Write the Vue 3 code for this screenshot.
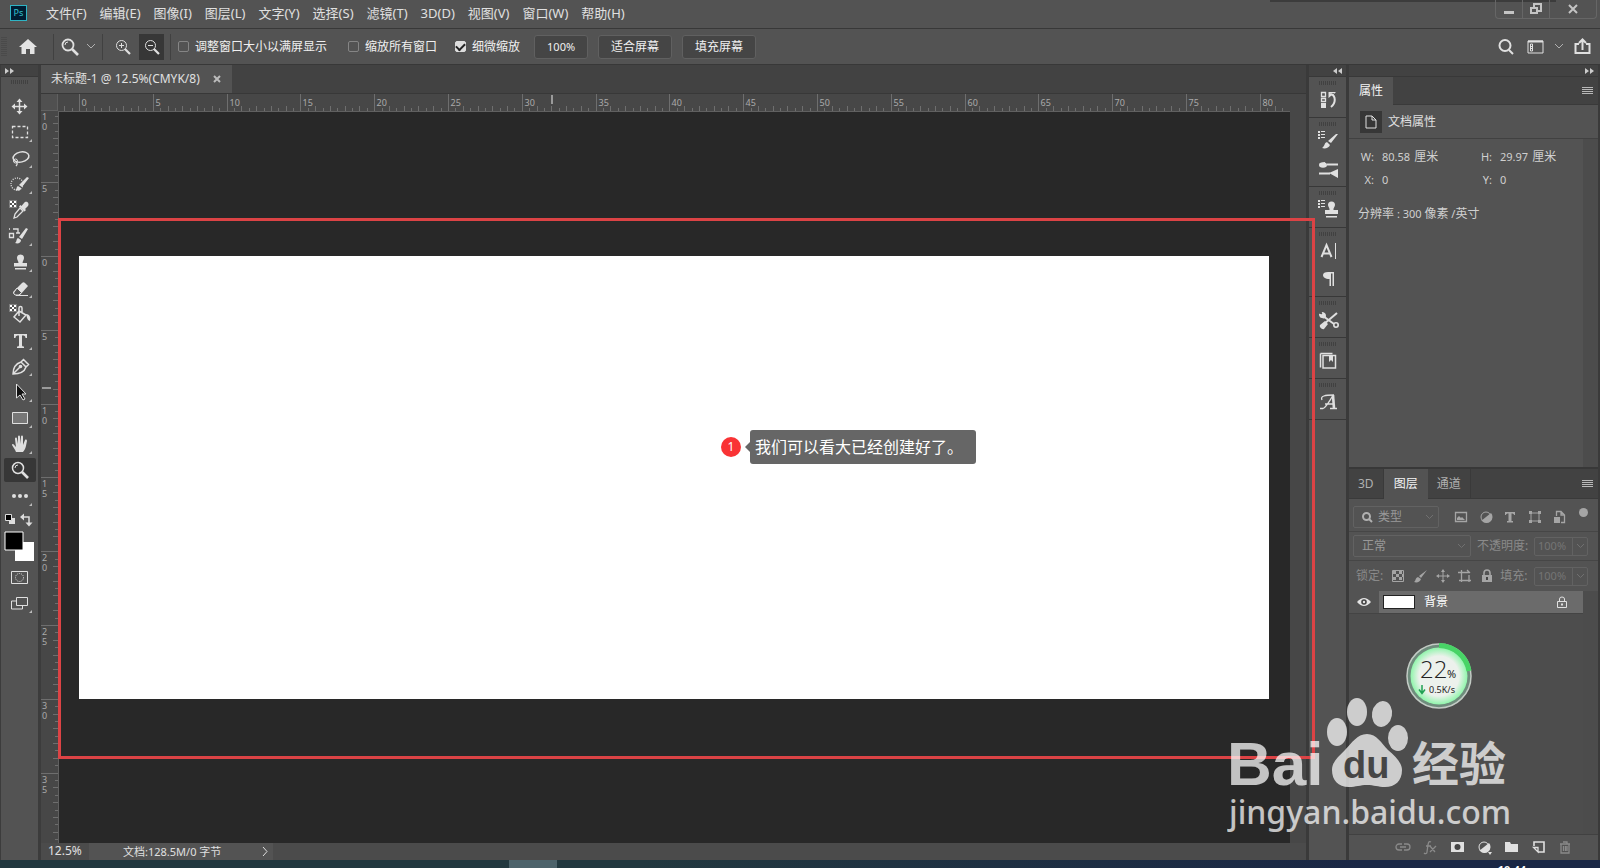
<template>
  <div class="app">
    <header class="menu-bar">
      <span class="logo">Ps</span>
      <nav class="menus">
        <button v-for="m in menus" :key="m" class="menu">{{ m }}</button>
      </nav>
      <div class="top-shade"></div>
      <div class="window-buttons">
        <button aria-label="最小化"><svg width="12" height="14"><path d="M1 9h10v3H1z" fill="#c4c4c4" /></svg></button>
        <button aria-label="还原"><svg width="14" height="14" fill="none" stroke="#c4c4c4" stroke-width="2"><path d="M5 5V2h7v7H9M2 6h6v5H2z" /></svg></button>
        <button class="close" aria-label="关闭"><svg width="12" height="14" stroke="#c4c4c4" stroke-width="2"><path d="M2 3l8 8M10 3l-8 8" /></svg></button>
      </div>
    </header>

    <div class="options-bar">
      <span class="grip-v"></span>
      <button class="home" aria-label="主页"><svg width="18" height="16"><path d="M9 0L18 8H15.500V15H11V10H7V15H2.500V8H0z" fill="#e4e4e4" /></svg></button>
      <span class="sep"></span>
      <button class="zoom-tool" aria-label="缩放工具">
        <svg width="18" height="18" v-html="icons.zoom"></svg>
        <svg width="8" height="5" class="line-icon"><path d="M0 0l4 4 4-4" /></svg>
      </button>
      <span class="sep"></span>
      <button class="square" aria-label="放大"><svg width="16" height="16" class="line-icon bright"><circle cx="6.500" cy="6.500" r="5" /><path d="M4 6.500h5M6.500 4v5" /><path d="M10 10l5 5" stroke-width="2.200" /></svg></button>
      <button class="square active" aria-label="缩小"><svg width="16" height="16" class="line-icon bright"><circle cx="6.500" cy="6.500" r="5" /><path d="M4 6.500h5" /><path d="M10 10l5 5" stroke-width="2.200" /></svg></button>
      <span class="sep"></span>
      <label class="check c1"><input type="checkbox" />调整窗口大小以满屏显示</label>
      <label class="check c2"><input type="checkbox" />缩放所有窗口</label>
      <label class="check c3"><input type="checkbox" checked />细微缩放</label>
      <button class="opt num">100%</button>
      <button class="opt">适合屏幕</button>
      <button class="opt">填充屏幕</button>
      <div class="options-right">
        <button aria-label="搜索"><svg width="16" height="16" class="line-icon bright thick"><circle cx="7" cy="6.500" r="5.500" /><path d="M11 11l4 4" /></svg></button>
        <button aria-label="工作区"><svg width="17" height="14" class="line-icon bright"><path d="M1 1h15v12H1z" /><path d="M1 1.500h15" stroke-width="2" /><path d="M3.500 4h2v7h-2zM3.500 6.500h2M3.500 8.500h2" /></svg></button>
        <button aria-label="工作区列表"><svg width="8" height="5" class="line-icon"><path d="M0 0l4 4 4-4" /></svg></button>
        <button aria-label="共享"><svg width="17" height="17" class="line-icon bright thick"><path d="M5 6H1.500v9h14V6H12" /><path d="M8.500 12V2M5 5l3.500-3.500L12 5" /></svg></button>
      </div>
    </div>

    <main class="main">
      <aside class="tools">
        <div class="strip"><svg width="9" height="6" v-html="icons.right"></svg></div>
        <span class="grip"></span>
        <div class="tool-list">
          <button v-for="t in tools" :key="t.name" class="tool" :class="{ active: t.active }" :aria-label="t.name">
            <svg width="32" height="24" v-html="t.svg"></svg>
          </button>
        </div>
        <div class="swatches">
          <svg width="36" height="54">
            <path d="M8 8h6v6H8z" fill="#ddd" />
            <path d="M4.500 4.500h6v6h-6z" fill="#000" stroke="#ddd" />
            <path d="M21 7h7v7" fill="none" stroke="#ddd" stroke-width="1.500" />
            <path d="M23 3.500v7L19 7zM24.500 12.500h7l-3.500 4z" fill="#ddd" />
            <path d="M14 32h19v19H14z" fill="#fff" />
            <path d="M4 22h18v18H4z" fill="#000" stroke="#fff" stroke-width="1" />
          </svg>
        </div>
        <button class="tool" aria-label="快速蒙版"><svg width="32" height="24" class="line-icon bright"><path d="M7.500 6.500h16v12h-16z" /><circle cx="15.500" cy="12.500" r="4" stroke-dasharray="1 1" /></svg></button>
        <button class="tool" aria-label="屏幕模式"><svg width="32" height="24" class="line-icon bright"><path d="M12 10H7.500v8h11v-3" /><path d="M12.500 6.500h11v8h-11z" /><path d="M28 19v3h-3z" fill="#bbb" stroke="none" /></svg></button>
      </aside>

      <section class="document">
        <div class="tab-row">
          <div class="doc-tab">未标题-1 @ 12.5%(CMYK/8)<button aria-label="关闭文档"><svg width="8" height="8" stroke="#bbb" stroke-width="2"><path d="M1 1l6 6M7 1L1 7" /></svg></button></div>
        </div>
        <div class="view">
          <div class="corner"></div>
          <svg class="ruler-h">
            <line v-for="t in hTicks" :key="t.i" :x1="t.pos" :x2="t.pos" :y1="t.start" y2="17" />
            <text v-for="t in hLabels" :key="t.i" :x="t.pos + 2" y="12">{{ t.label }}</text>
            <line class="cursor" x1="494" x2="494" y1="1" y2="10" />
          </svg>
          <svg class="ruler-v">
            <line v-for="t in vTicks" :key="t.i" :y1="t.pos" :y2="t.pos" :x1="t.start" x2="17" />
            <template v-for="t in vLabels" :key="t.i">
              <text v-for="(c, n) in t.label" :key="n" x="1" :y="t.pos + 9 + n * 10">{{ c }}</text>
            </template>
            <line class="cursor" y1="277" y2="277" x1="1" x2="10" />
          </svg>
          <div class="workspace">
            <div class="canvas">
              <div class="note">
                <span class="badge">1</span>
                <span class="bubble">我们可以看大已经创建好了。</span>
              </div>
            </div>
          </div>
        </div>
        <footer class="status">
          <span class="zoom-value">12.5%</span>
          <button class="doc-info"><span>文档:128.5M/0 字节</span><svg width="6" height="11" class="line-icon bright"><path d="M1 1l4 4.500-4 4.500" /></svg></button>
        </footer>
      </section>

      <aside class="dock">
        <div class="strip"><svg width="9" height="6" v-html="icons.left"></svg></div>
        <div v-for="(g, n) in dock" :key="n" class="dock-group">
          <span class="grip"></span>
          <button v-for="d in g" :key="d.name" :aria-label="d.name"><svg width="24" height="24" v-html="d.svg"></svg></button>
        </div>
      </aside>

      <aside class="panels">
        <div class="strip"><svg width="9" height="6" v-html="icons.right"></svg></div>
        <section class="props">
          <div class="panel-tabs">
            <button class="panel-tab on">属性</button>
            <button class="burger" aria-label="面板菜单"><i></i></button>
          </div>
          <h2><span class="doc-icon"><svg width="12" height="14" class="line-icon bright"><path d="M1 1h6l4 4v8H1zM7 1v4h4" /></svg></span>文档属性</h2>
          <div class="scroll-body">
            <div class="prop-body">
              <dl class="prop-grid">
                <dt>W:</dt><dd>80.58<b>厘米</b></dd>
                <dt>H:</dt><dd>29.97<b>厘米</b></dd>
                <dt>X:</dt><dd>0</dd>
                <dt>Y:</dt><dd>0</dd>
              </dl>
              <p><b>分辨率</b> : 300 <b>像素</b> /<b>英寸</b></p>
            </div>
            <div class="scroll-track"></div>
          </div>
        </section>

        <section class="layers">
          <div class="panel-tabs">
            <button class="panel-tab off">3D</button>
            <button class="panel-tab on">图层</button>
            <button class="panel-tab off">通道</button>
            <button class="burger" aria-label="面板菜单"><i></i></button>
          </div>
          <div class="row filter">
            <div class="field kind">
              <svg width="11" height="11" class="line-icon thick"><circle cx="4.500" cy="4.500" r="3.500" /><path d="M7 7l3 3" /></svg>
              <select aria-label="类型"><option>类型</option></select>
              <svg width="7" height="4" class="line-icon faint"><path d="M0 0l3.500 3.500L7 0" /></svg>
            </div>
            <div class="icons filters">
              <button v-for="f in filters" :key="f.name" :aria-label="f.name"><svg width="14" height="14" v-html="f.svg"></svg></button>
            </div>
            <span class="dot"></span>
          </div>
          <div class="row blend">
            <div class="field mode">
              <select aria-label="混合模式"><option>正常</option></select>
              <svg width="7" height="4" class="line-icon faint"><path d="M0 0l3.500 3.500L7 0" /></svg>
            </div>
            <label for="opacity">不透明度:</label>
            <div class="pct"><input id="opacity" value="100%" /><button aria-label="不透明度滑块"><svg width="7" height="4" class="line-icon faint"><path d="M0 0l3.500 3.500L7 0" /></svg></button></div>
          </div>
          <div class="row lock">
            <span>锁定:</span>
            <div class="icons locks">
              <button v-for="l in locks" :key="l.name" :aria-label="l.name"><svg width="14" height="14" v-html="l.svg"></svg></button>
            </div>
            <label for="fill">填充:</label>
            <div class="pct"><input id="fill" value="100%" /><button aria-label="填充滑块"><svg width="7" height="4" class="line-icon faint"><path d="M0 0l3.500 3.500L7 0" /></svg></button></div>
          </div>
          <div class="scroll-body list">
            <ul>
              <li>
                <button class="eye" aria-label="可见性"><svg width="14" height="10"><path d="M0 5Q7-3 14 5Q7 13 0 5z" fill="#e4e4e4" /><circle cx="7" cy="5" r="2.800" fill="#444" /><circle cx="7" cy="5" r="1.200" fill="#e4e4e4" /></svg></button>
                <div class="layer">
                  <span class="thumb"></span><span class="layer-name">背景</span>
                  <svg width="12" height="13" class="line-icon bright"><path d="M1.500 5.500h9v6h-9zM3.500 5.500V3a2.500 2 0 015 0v2.500" /><path d="M6 7.500v2" stroke-width="2" /></svg>
                </div>
              </li>
            </ul>
            <div class="scroll-track"></div>
          </div>
          <div class="layer-actions">
            <button v-for="a in actions" :key="a.name" :aria-label="a.name"><svg width="16" height="16" v-html="a.svg"></svg></button>
          </div>
        </section>
      </aside>
    </main>

    <footer class="taskbar"><span class="task"></span><time>10:44</time></footer>

    <div class="frame"></div>

    <div class="meter">
      <svg width="68" height="68" viewBox="-34 -34 68 68">
        <defs>
          <radialGradient id="meterFill">
            <stop offset="0.700" stop-color="#ecf1ec" />
            <stop offset="1" stop-color="#90f5ab" />
          </radialGradient>
        </defs>
        <circle r="32" fill="#6e8c7c" stroke="#c3cbc5" stroke-width="1.500" />
        <circle r="28.500" fill="url(#meterFill)" />
        <path d="M0-30.500A30.500 30.500 0 0 1 30-5" fill="none" stroke="#48d466" stroke-width="5" />
        <text x="-19" y="2" font-size="24" class="thin">22</text>
        <text x="8" y="2" font-size="11">%</text>
        <path d="M-17 9v8M-20 13.500l3 4 3-4" fill="none" stroke="#21a053" stroke-width="1.500" />
        <text x="-10" y="17" font-size="9">0.5K/s</text>
      </svg>
    </div>

    <svg class="watermark" width="300" height="146" viewBox="0 -6 300 146">
      <text x="0" y="84" class="latin">Bai</text>
      <ellipse cx="110" cy="31" rx="10" ry="14" />
      <ellipse cx="130" cy="11" rx="10" ry="14" />
      <ellipse cx="155" cy="13" rx="10" ry="13" transform="rotate(10 155 13)" />
      <ellipse cx="171" cy="37" rx="10" ry="13" />
      <path d="M140 33C150 33 154 42 161 49C169 56 175 62 175 69C175 80 168 86 158 86C151 86 147 84 140 84C133 84 129 86 122 86C111 86 105 79 105 69C105 61 111 56 118 49C125 42 130 33 140 33z" />
      <text x="116" y="77" class="du">du</text>
      <text x="185" y="80" class="cjk">经验</text>
      <text x="2" y="123" class="url">jingyan.baidu.com</text>
    </svg>
  </div>
</template>

<script setup>
const menus = ['文件(F)', '编辑(E)', '图像(I)', '图层(L)', '文字(Y)', '选择(S)', '滤镜(T)', '3D(D)', '视图(V)', '窗口(W)', '帮助(H)'];

///////////////////////////////////////////////////////////////////////////////
// rulers

const CM = 14.76;

// two ticks per centimetre, a long one every five
function makeTicks(from, to, origin) {
    const list = [];
    for (let i = from; i <= to; i++) {
        const major = i % 10 === 0;
        list.push({
            i,
            pos: Math.round(origin + i * CM / 2) + 0.5,
            start: major ? 0 : (i % 2 === 0 ? 12 : 14),
            label: major ? String(Math.abs(i / 2)) : '',
        });
    }
    return list;
}

const hTicks = makeTicks(-2, 163, 21);
const vTicks = makeTicks(-19, 79, 145);
const hLabels = hTicks.filter((t) => t.label);
const vLabels = vTicks.filter((t) => t.label).concat({ i: 'top', pos: 0, label: '10' });

///////////////////////////////////////////////////////////////////////////////
// icons

const W = 'fill="#e0e0e0"';
const S = 'fill="none" stroke="#e0e0e0"';
const G = 'fill="#a5a5a5"';
const GS = 'fill="none" stroke="#a5a5a5"';
const corner = '<path d="M28 19v3h-3z" fill="#bbb"/>';
const dots = '<path d="M2 2h2v2H2zM2 5h2v2H2zM2 8h2v2H2zM5 2h4v1H5zM5 5h4v1H5zM5 8h4v1H5z" fill="#e0e0e0"/>';
const checker = '<path d="M6 3h2v2H6zM10 3h2v2h-2zM8 5h2v2H8zM6 7h2v2H6zM10 7h2v2h-2z" fill="#fff"/><path d="M5.500 2.500h7v7h-7z" fill="none" stroke="#aaa" stroke-dasharray="1 1"/>';
const stamp = `<path d="M13 8a3.500 3.500 0 117 0c0 2-1.500 3-1.500 5H23v3.500H10V13h4.500c0-2-1.500-3-1.500-5zM11 18h11v1.500H11z" ${W}/>`;

const icons = {
    zoom: `<circle cx="7" cy="7" r="5.500" ${S} stroke-width="1.800"/><path d="M4 7a3 3 0 013-3" ${S}/><path d="M11 11l6 6" ${S} stroke-width="2.600"/>`,
    right: '<path d="M0 0l4 3-4 3zM5 0l4 3-4 3z" fill="#ccc"/>',
    left: '<path d="M4 0L0 3l4 3zM9 0L5 3l4 3z" fill="#ccc"/>',
};

const tools = [
    { name: '移动', svg: `<path d="M15.500 7v11M10 12.500h11" ${S} stroke-width="1.500"/><path d="M15.500 4.500l3 3.500h-6zM15.500 20.500l3-3.500h-6zM7.500 12.500l3.500-3v6zM23.500 12.500l-3.500-3v6z" ${W}/>` },
    { name: '矩形选框', svg: `<path d="M8.500 6.500h15v11h-15z" ${S} stroke-width="1.300" stroke-dasharray="3 2"/>${corner}` },
    { name: '套索', svg: `<ellipse cx="17" cy="11" rx="8" ry="5" transform="rotate(-12 17 11)" ${S} stroke-width="1.500"/><circle cx="11.500" cy="15" r="2" ${S}/><path d="M12 16c2 1 1 3 0 4" ${S} stroke-width="1.300"/>${corner}` },
    { name: '快速选择', svg: `<circle cx="13" cy="12" r="6" ${S} stroke-width="1.300" stroke-dasharray="1 1.300"/><path d="M25 6l-7 9-3-2 8-8zM14 14l3 2c0 3-3 3-6 2 2 0 1-3 3-4z" ${W}/>${corner}` },
    { name: '吸管', svg: `${checker}<path d="M20 5c2-3 6 0 4 3l-3 3 1 1-1.500 1.500-5.500-5L16.500 7l1 1z" ${W}/><path d="M16 10l3 3-6 6-3 1 1-4z" ${S} stroke-width="1.300"/>` },
    { name: '混合画笔', svg: `<path d="M5.500 9.500h4v4h-4zM9 5h5v4M5 5h1M12 9h4" ${S} stroke-width="1.300"/><path d="M24 5l-6 10-3-2 7-9zM14 14l3 2c0 3-3 4-6 3 2-1 1-4 3-5z" ${W}/>${corner}` },
    { name: '仿制图章', svg: `${stamp}${corner}` },
    { name: '橡皮擦', svg: `<path d="M9 16l9-9c1-1 2-1 3 0l3 3-8 9h-5l-2-2z" ${W}/><path d="M13 12l4.500 4.500L15 19h-4l-1.500-2z" fill="#555" stroke="#e0e0e0"/><path d="M12 19.500h12" ${S}/>${corner}` },
    { name: '油漆桶', svg: `${checker}<path d="M15 9l7 4-6 7-6-5zM15 14V6c0-2 3-2 3 0v4" ${S} stroke-width="1.500"/><path d="M22 12c4 0 5 4 4 7-3-1-3-4-4-7z" ${W}/>` },
    { name: '文字', svg: `<path d="M10 6h13v4h-1.500c0-2-1-2.500-3.500-2.500V17c0 1 .5 1.500 2 1.500V20h-7v-1.500c1.500 0 2-.5 2-1.500V7.500c-2.500 0-3.500.5-3.500 2.500H10z" ${W}/>${corner}` },
    { name: '钢笔', svg: `<path d="M9 20c0-6 2-10 8-12l5 5c-2 6-7 7-13 7zM9 20l7-7M17 8l2.500-2.500 5 5L22 13" ${S} stroke-width="1.500"/><circle cx="16.500" cy="12.500" r="1.800" ${W}/>${corner}` },
    { name: '路径选择', svg: `<path d="M12.500 4v14l3.500-3 3 5 2-1-3-5h4z" fill="#111" stroke="#e0e0e0"/>${corner}` },
    { name: '矩形', svg: `<path d="M8.500 6.500h15v11h-15z" fill="#777" stroke="#e0e0e0"/>${corner}` },
    { name: '抓手', svg: `<path d="M12 20c-1-3-3-5-4-7 0-2 2-1 3 1l1 1-1-8c0-2 2-2 2 0l1 5V5c0-2 2-2 2 0v7l1-7c0-2 2-2 2 0v8l2-5c1-1 2 0 2 1-1 4-1 8-4 11z" ${W}/>${corner}` },
    { name: '缩放', active: true, svg: `<circle cx="14" cy="10" r="5.500" ${S} stroke-width="1.500"/><path d="M11 10a3 3 0 013-3" ${S}/><path d="M18 14l6 6" ${S} stroke-width="2.600"/>` },
    { name: '更多', svg: `<circle cx="10" cy="12" r="2" ${W}/><circle cx="16" cy="12" r="2" ${W}/><circle cx="22" cy="12" r="2" ${W}/>${corner}` },
];

const dock = [
    [
        { name: '历史记录', svg: `<path d="M5.500 4.500h4v4h-4zM5.500 10.500h4v3h-4z" ${S} stroke-width="1.300"/><path d="M5 15h5v5H5z" ${W}/><path d="M13 4h7l-3 3z M12.500 4v6l6-5z" ${W}/><path d="M15 6c5 2 5 9 0 13" ${S} stroke-width="2"/>` },
    ],
    [
        { name: '画笔设置', svg: `${dots}<path d="M22 5l-7 9-3-2 8-7zM11 13l3 3c-1 3-5 4-8 3 3-2 2-5 5-6z" ${W}/>` },
        { name: '画笔', svg: `<path d="M11 7.500h11M3 16.500h11" ${S} stroke-width="2"/><ellipse cx="7" cy="8" rx="4" ry="2.800" ${W}/><path d="M3 7l6-2v3zM13 16l9-4v9z" ${W}/>` },
    ],
    [
        { name: '仿制源', svg: `${dots}<path d="M12 7a3.500 3.500 0 117 0c0 2-2 3-1.500 5H22v4H9v-4h4.500C14 10 12 9 12 7zM10 18h11v1.500H10z" ${W}/>` },
    ],
    [
        { name: '字符', svg: `<path d="M5.500 18L10.500 6l5 12M7.500 14.500h6" ${S} stroke-width="2"/><path d="M19.500 4v16" ${S}/>` },
        { name: '段落', svg: `<path d="M18 5v14h-1.500V6.500H15V19h-1.500v-7C9 12 7 10 7 8s2-3 5-3z" ${W}/>` },
    ],
    [
        { name: '工具预设', svg: `<path d="M8 16L21 5" ${S} stroke-width="2"/><path d="M7 8l11 8" ${S} stroke-width="2"/><path d="M4 17l5-4 3 3-4 5c-2 1-5-2-4-4zM3 6c1-1 2 1 3 0s-1-2 0-2c2 0 4 1 4 4 0 2-2 3-4 2C4 10 3 8 3 6z" ${W}/><circle cx="20" cy="17" r="2.200" ${S} stroke-width="1.600"/>` },
    ],
    [
        { name: '库', svg: `<path d="M4.500 4.500h12M4.500 4.500v14M7 6.500h12.500v12.500H7z" ${S} stroke-width="1.500"/><path d="M4 18h3M13 7h4v6l-2-2-2 2z" ${W}/>` },
    ],
    [
        { name: '字形', svg: `<path d="M4 18.500h3c3-1 6-7 10-13M9 14h8M6 10c-2-4 3-5 12-5M14 18.500h7" ${S} stroke-width="1.300"/><path d="M17 5l1 13.500" ${S} stroke-width="2.600"/>` },
    ],
];

const filters = [
    { name: '像素', svg: `<path d="M1.500 2.500h11v9h-11z" ${GS} stroke-width="1.300"/><path d="M3 10V8l2-2 2 2 1-1 3 3z" ${G}/>` },
    { name: '调整', svg: `<circle cx="7" cy="7" r="5" ${GS}/><path d="M2 11L12 3a6 6 0 01-9 8z" ${G}/>` },
    { name: '文字', svg: `<path d="M2 2h10v3h-1c0-1-1-1.500-2.500-1.500V11h1.500v1.500H4V11h1.500V3.500C4 3.500 3 4 3 5H2z" ${G}/>` },
    { name: '形状', svg: `<path d="M3 3h8v8H3z" ${GS}/><path d="M1 1h3v3H1zM10 1h3v3h-3zM1 10h3v3H1zM10 10h3v3h-3z" ${G}/>` },
    { name: '智能对象', svg: `<path d="M4.500 6V1.500H9L12.500 5v7.500H9M9 1.500V5h3" ${GS} stroke-width="1.300"/><path d="M2 7h6v6H2z" ${G}/>` },
];

const locks = [
    { name: '透明像素', svg: `<path d="M1.500 1.500h11v11h-11z" ${GS}/><path d="M2 2h3v3H2zM8 2h3v3H8zM5 5h3v3H5zM11 5h2v3h-2zM2 8h3v3H2zM8 8h3v3H8z" ${G}/>` },
    { name: '图像像素', svg: `<path d="M14 1L8 9 6 7zM5 8l3 2c-1 3-4 4-7 3 2-1 1-4 4-5z" ${G}/>` },
    { name: '位置', svg: `<path d="M7 2v10M2 7h10" ${GS}/><path d="M7 0l2 3H5zM7 14l2-3H5zM0 7l3-2v4zM14 7l-3-2v4z" ${G}/>` },
    { name: '画板', svg: `<path d="M3.500 1v12M0 3.500h11M11 6v7M1 11.500h12M9 1l3 3" ${GS} stroke-width="1.300"/>` },
    { name: '全部', svg: `<path d="M2 6h10v7H2z" ${G}/><path d="M4 6V4a3 3 0 016 0v2" ${GS} stroke-width="1.600"/><path d="M6 8h2v3H6z" fill="#444"/>` },
];

const actions = [
    { name: '链接', svg: '<path d="M7 5H4a3 3 0 000 6h3M9 5h3a3 3 0 010 6H9M5 8h6" fill="none" stroke="#8a8a8a" stroke-width="1.300"/>' },
    { name: '样式', svg: '<path d="M9 3C6 1 6 6 5 13c0 2-2 2-3 1M4 7h5M8 7l5 6M14 7l-6 6" fill="none" stroke="#8a8a8a" stroke-width="1.300"/>' },
    { name: '蒙版', svg: `<path d="M2 3h13v10H2z" ${W}/><circle cx="8.500" cy="8" r="3" fill="#444"/>` },
    { name: '调整图层', svg: `<circle cx="8" cy="8" r="5" ${S}/><path d="M3 12L13 4a6 6 0 01-9 8zM12 13h4l-2 3z" ${W}/>` },
    { name: '新建组', svg: `<path d="M2 3h5l1 2h7v8H2z" ${W}/>` },
    { name: '新建图层', svg: `<path d="M4 7V3h10v10H8" ${S} stroke-width="1.600"/><path d="M3.500 8.500H8V13z" ${S} stroke-width="1.300"/>` },
    { name: '删除', svg: '<path d="M3 5h10M4 5v9h8V5M6 3h4v2M6.500 7v5M8.500 7v5M10 7v5" fill="none" stroke="#8a8a8a" stroke-width="1.300"/>' },
];
</script>

<style>
body {
    margin: 0;
    background: #282828;
}
</style>

<style scoped>
* {
    box-sizing: border-box;
}

.app {
    position: relative;
    display: flex;
    flex-direction: column;
    height: 100vh;
    overflow: hidden;
    background: #535353;
    color: #e0e0e0;
    font: 12px/16px "Noto Sans", "Noto Sans CJK SC", sans-serif;
}

button, input, select {
    margin: 0;
    padding: 0;
    border: 0;
    background: none;
    color: inherit;
    font: inherit;
    appearance: none;
}

button {
    display: flex;
    align-items: center;
    justify-content: center;
}

svg {
    display: block;
    flex: none;
}

.line-icon {
    fill: none;
    stroke: #b0b0b0;
}

.bright {
    stroke: #e0e0e0;
}

.thick {
    stroke-width: 2;
}

.faint {
    stroke: #707070;
}

/* menu */

.menu-bar {
    display: flex;
    height: 29px;
    flex: none;
    border-bottom: 1px solid #383838;
}

.logo {
    width: 17px;
    height: 16px;
    margin: 5px 19px 0 10px;
    border: 1px solid #2fb4c4;
    background: #001d33;
    color: #35c0d0;
    font-size: 9px;
    line-height: 13px;
    text-align: center;
}

.menus {
    display: flex;
    gap: 13px;
    height: 25px;
    font-size: 13px;
}

.top-shade {
    width: 286px;
    height: 2px;
    margin: 0 -61px 0 auto;
    background: #3c3c3c;
}

.window-buttons {
    display: flex;
    height: 19px;
    margin-right: 3px;
    border: 1px solid #666;
    border-top: 0;
    border-radius: 0 0 4px 4px;
}

.window-buttons button {
    width: 27px;
    border-right: 1px solid #666;
}

.window-buttons .close {
    width: 46px;
    border: 0;
}

/* options */

.options-bar {
    display: flex;
    align-items: center;
    height: 36px;
    flex: none;
    border-bottom: 1px solid #383838;
}

.grip-v {
    width: 6px;
    height: 20px;
    margin-left: 1px;
    background: repeating-linear-gradient(#4a4a4a 0 1px, transparent 1px 2px);
}

.home {
    width: 46px;
    padding-right: 4px;
}

.sep {
    width: 1px;
    height: 26px;
    background: #414141;
}

.zoom-tool {
    gap: 8px;
    width: 48px;
}

.square {
    width: 25px;
    height: 26px;
    margin-left: 7px;
}

.square.active {
    margin: 0 6px 0 4px;
    background: #373737;
}

.check {
    display: flex;
    align-items: center;
    gap: 6px;
    margin-left: 21px;
    color: #f0f0f0;
    white-space: nowrap;
}

.check.c1 {
    margin-left: 7px;
}

.check.c3 {
    margin-left: 18px;
}

.check input {
    width: 11px;
    height: 11px;
    border: 1px solid #858585;
    border-radius: 2px;
}

.check input:checked {
    border-color: #ddd;
    background: #ddd;
    display: grid;
    place-items: center;
}

.check input:checked::after {
    content: '';
    width: 7px;
    height: 4px;
    margin-top: -2px;
    border: solid #222;
    border-width: 0 0 2px 2px;
    transform: rotate(-45deg);
}

.opt {
    height: 24px;
    margin-left: 10px;
    padding: 0 12px;
    border: 1px solid #606060;
    border-radius: 3px;
    background: #454545;
    color: #f0f0f0;
}

.opt.num {
    margin-left: 14px;
    font-size: 11px;
}

.options-right {
    display: flex;
    gap: 13px;
    margin-left: auto;
    padding-right: 9px;
}

.options-right button:nth-child(3) {
    margin: 0 -2px;
}

/* main columns */

.main {
    display: flex;
    flex: 1;
    min-height: 0;
}

.strip {
    display: flex;
    align-items: center;
    height: 12px;
    flex: none;
    padding: 0 4px;
    border-bottom: 1px solid #383838;
    background: #424242;
}

.tools {
    width: 41px;
    flex: none;
    border: solid #3c3c3c;
    border-width: 0 3px 0 1px;
}

.grip {
    display: block;
    width: 18px;
    height: 4px;
    background: repeating-linear-gradient(90deg, #414141 0 1px, transparent 1px 2px);
}

.tools .grip {
    margin: 3px auto 10px;
}

.tool {
    width: 32px;
    height: 24px;
    margin: 0 0 2px 3px;
}

.tool.active {
    border-radius: 2px;
    background: #373737;
}

.swatches {
    height: 55px;
}

/* document */

.document {
    display: flex;
    flex: 1;
    flex-direction: column;
    min-width: 0;
    background: #474747;
}

.tab-row {
    display: flex;
    height: 29px;
    flex: none;
    border-bottom: 1px solid #383838;
    background: #424242;
}

.doc-tab {
    display: flex;
    align-items: center;
    gap: 13px;
    padding: 0 11px 0 10px;
    background: #535353;
    font-size: 12px;
}

.view {
    display: grid;
    flex: 1;
    grid-template: 17px 1fr / 17px 1fr;
    min-height: 0;
    padding-right: 16px;
}

.corner {
    border: solid #606060;
    border-width: 0 1px 1px 0;
    background: #505050;
}

.ruler-h, .ruler-v {
    width: 100%;
    height: 100%;
    overflow: hidden;
    background: #474747;
    font-size: 9px;
}

.ruler-h line, .ruler-v line {
    stroke: #6e6e6e;
}

.ruler-h text, .ruler-v text {
    fill: #aaa;
}

.ruler-h .cursor, .ruler-v .cursor {
    stroke: #eee;
}

.workspace {
    display: grid;
    place-items: center;
    padding: 0 21px 0 20px;
    border: solid #606060;
    border-width: 1px 0 0 1px;
    background: #282828;
}

.canvas {
    position: relative;
    width: 100%;
    aspect-ratio: 1190 / 443;
    background: #fff;
}

.note {
    position: absolute;
    top: 174px;
    left: 642px;
    display: flex;
    align-items: center;
    gap: 9px;
}

.badge {
    width: 20px;
    height: 20px;
    border-radius: 50%;
    background: #f93335;
    color: #fff;
    line-height: 20px;
    text-align: center;
}

.bubble {
    position: relative;
    width: 226px;
    padding: 5px;
    border-radius: 3px;
    background: #666;
    color: #fff;
    font-size: 16px;
    line-height: 24px;
    white-space: nowrap;
}

.bubble::before {
    content: '';
    position: absolute;
    top: 12px;
    left: -5px;
    border: 5px solid transparent;
    border-left: 0;
    border-right-color: #666;
}

.status {
    display: flex;
    height: 17px;
    flex: none;
    background: #4b4b4b;
}

.zoom-value {
    width: 48px;
    padding-left: 7px;
    font-size: 12px;
}

.doc-info {
    width: 184px;
    justify-content: space-between;
    padding: 0 5px 0 34px;
    background: #535353;
    font-size: 11px;
}

/* icon dock */

.dock {
    width: 43px;
    flex: none;
    border: solid #3a3a3a;
    border-width: 0 3px;
}

.dock .strip {
    justify-content: flex-end;
}

.dock-group {
    padding: 4px 0 3px;
    border-bottom: 1px solid #383838;
}

.dock-group .grip {
    margin: 0 auto 1px;
}

.dock-group button {
    width: 100%;
    height: 28px;
}

/* panels */

.panels {
    display: flex;
    flex-direction: column;
    width: 251px;
    flex: none;
    border-right: 2px solid #3a3a3a;
}

.panels .strip {
    justify-content: flex-end;
}

.props {
    display: flex;
    flex-direction: column;
    height: 392px;
    flex: none;
    border-bottom: 2px solid #383838;
}

.panel-tabs {
    display: flex;
    height: 28px;
    flex: none;
    background: #424242;
    border-bottom: 1px solid #3a3a3a;
}

.panel-tab {
    padding: 0 10px;
    color: #b0b0b0;
}

.panel-tab.off {
    padding: 0 9px;
    border-right: 1px solid #3a3a3a;
}

.panel-tab.on {
    height: 28px;
    background: #535353;
    color: #f5f5f5;
}

.burger {
    margin-left: auto;
    padding-right: 5px;
}

.burger i {
    width: 11px;
    height: 8px;
    background: repeating-linear-gradient(#b8b8b8 0 1px, transparent 1px 2px);
}

h2 {
    display: flex;
    align-items: center;
    gap: 6px;
    height: 34px;
    flex: none;
    margin: 0;
    padding-left: 11px;
    border-bottom: 1px solid #414141;
    font-size: 12px;
    font-weight: 400;
}

.doc-icon {
    display: grid;
    place-items: center;
    width: 22px;
    height: 22px;
    background: #373737;
}

.scroll-body {
    display: flex;
    flex: 1;
    min-height: 0;
}

.scroll-track {
    width: 15px;
    background: #4c4c4c;
}

.prop-body {
    flex: 1;
    padding: 6px 0 0 9px;
    color: #d0d0d0;
    font-size: 11px;
}

.prop-body b {
    font-size: 12px;
    font-weight: 400;
}

.prop-grid {
    display: grid;
    grid-template-columns: 16px 86px 16px 1fr;
    gap: 0 8px;
    margin: 0;
    line-height: 23px;
}

.prop-grid dt {
    text-align: right;
}

.prop-grid dd {
    margin: 0;
}

.prop-grid b {
    margin-left: 4px;
}

.prop-body p {
    margin: 15px 0 0;
}

.layers {
    display: flex;
    flex: 1;
    flex-direction: column;
    min-height: 0;
}

.layers .panel-tabs, .layers .panel-tab.on {
    height: 30px;
}

.row {
    display: flex;
    align-items: center;
    flex: none;
    padding: 0 10px 0 4px;
    border-bottom: 1px solid #464646;
    color: #8a8a8a;
}

.filter {
    height: 33px;
    padding-top: 4px;
}

.blend {
    height: 29px;
}

.lock {
    height: 30px;
    padding-left: 7px;
    border: 0;
}

.field {
    display: flex;
    align-items: center;
    height: 22px;
    padding: 0 5px 0 8px;
    border: 1px solid #626262;
    border-radius: 2px;
}

.field select {
    flex: 1;
    min-width: 0;
}

.kind {
    width: 86px;
    gap: 5px;
    color: #999;
}

.mode {
    width: 118px;
    margin-right: 6px;
    color: #999;
}

.icons {
    display: flex;
    justify-content: space-between;
}

.filters {
    width: 112px;
    margin-left: 15px;
}

.dot {
    width: 9px;
    height: 9px;
    margin: -10px 0 0 auto;
    border-radius: 50%;
    background: #a5a5a5;
}

.locks {
    width: 103px;
    margin: 0 6px 0 8px;
}

.pct {
    display: flex;
    width: 54px;
    height: 19px;
    margin-left: auto;
    border: 1px solid #626262;
    border-radius: 2px;
    color: #757575;
}

.pct input {
    flex: 1;
    min-width: 0;
    padding-left: 3px;
    font-size: 11px;
}

.pct button {
    width: 15px;
    border-left: 1px solid #626262;
}

.list {
    background: #4d4d4d;
}

ul {
    flex: 1;
    margin: 0;
    padding: 0;
    list-style: none;
}

li {
    display: flex;
    height: 23px;
    border-bottom: 1px solid #444;
    background: #535353;
}

.eye {
    width: 30px;
}

.layer {
    display: flex;
    align-items: center;
    flex: 1;
    padding: 0 15px 0 4px;
    background: #6b6b6b;
    color: #fff;
}

.thumb {
    width: 32px;
    height: 14px;
    border: 1px solid #222;
    background: #fff;
}

.layer-name {
    flex: 1;
    padding-left: 9px;
}

.layer-actions {
    display: flex;
    justify-content: flex-end;
    gap: 11px;
    height: 26px;
    flex: none;
    padding: 0 25px 2px 0;
    border-top: 1px solid #414141;
}

/* taskbar */

.taskbar {
    display: flex;
    height: 8px;
    flex: none;
    overflow: hidden;
    background: linear-gradient(90deg, #22383f 40%, #1a2745 85%);
}

.task {
    width: 48px;
    margin-left: 509px;
    background: #4d636b;
}

.taskbar time {
    margin: 2px 74px 0 auto;
    color: #fff;
    font-weight: 700;
    font-size: 11px;
}

/* overlays */

.frame {
    position: absolute;
    top: 218px;
    right: 285px;
    bottom: 109px;
    left: 58px;
    border: 3px solid #dc4345;
}

.meter {
    position: absolute;
    right: 127px;
    bottom: 158px;
}

.meter text {
    fill: #222;
}

.meter .thin {
    font-family: "Open Sans", sans-serif;
    font-weight: 300;
}

.watermark {
    position: absolute;
    right: 73px;
    bottom: 27px;
    fill: #fff;
    opacity: 0.72;
}

.watermark .latin {
    font: 700 62px "Liberation Sans", sans-serif;
}

.watermark .du {
    fill: #444;
    font: 700 38px "Liberation Sans", sans-serif;
}

.watermark .cjk {
    font: 700 47px "Noto Sans CJK SC", sans-serif;
}

.watermark .url {
    font: 500 32px "Noto Sans", sans-serif;
}
</style>
